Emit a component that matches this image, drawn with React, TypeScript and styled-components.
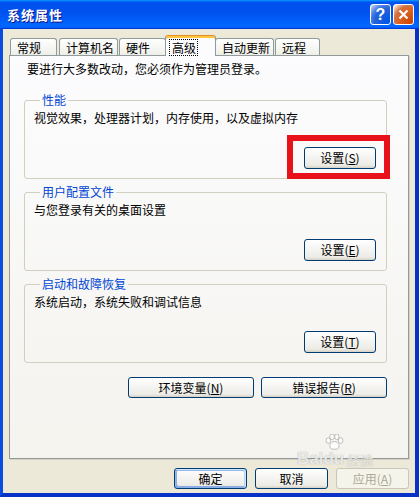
import styled, { createGlobalStyle } from "styled-components";

const GlobalStyle = createGlobalStyle`
  html, body {
    margin: 0;
    padding: 0;
    background: #0831d9;
  }
  body {
    font-family: "Noto Sans CJK SC", "Liberation Sans", sans-serif;
    font-size: 12px;
  }
`;

const Window = styled.div`
  position: relative;
  width: 419px;
  height: 497px;
  display: flex;
  flex-direction: column;
  overflow: hidden;
  background: #0842d9;
`;

const TitleBar = styled.div`
  height: 29px;
  flex-shrink: 0;
  display: flex;
  align-items: center;
  justify-content: space-between;
  padding: 0 5px 0 7px;
  background: linear-gradient(
    180deg,
    #0997ff,
    #0053ee 8%,
    #0050ee 40%,
    #06f 88%,
    #06f 93%,
    #005bff 95%,
    #003dd7 96%,
    #003dd7
  );
`;

const Title = styled.span`
  color: #fff;
  font-size: 13px;
  font-weight: bold;
  letter-spacing: 1px;
  text-shadow: 1px 1px #0f1089;
`;

const CaptionButtons = styled.div`
  display: flex;
  gap: 2px;
`;

const CaptionButton = styled.div<{ $close?: boolean }>`
  width: 21px;
  height: 21px;
  box-sizing: border-box;
  border: 1px solid #fff;
  border-radius: 3px;
  display: flex;
  align-items: center;
  justify-content: center;
  color: #fff;
  font: bold 16px "Liberation Sans", sans-serif;
  background: ${(p) =>
    p.$close
      ? "radial-gradient(circle at 90% 90%, #cc4600 0, #dc6527 55%, #cd7546 70%, #ffccb2 90%, #fff 100%)"
      : "radial-gradient(circle at 90% 90%, #0054e9 0, #2263d5 55%, #4479e4 70%, #a3bbec 90%, #fff 100%)"};
`;

const Frame = styled.div`
  flex: 1;
  display: flex;
  flex-direction: column;
  border-left: 3px solid #0a4be0;
  border-right: 4px solid #0831c8;
  border-bottom: 4px solid #0831c8;
  box-shadow: 1px 0 #00138c, 0 1px #00138c;
`;

const Body = styled.div`
  flex: 1;
  display: flex;
  flex-direction: column;
  background: #ece9d8;
  padding: 6px 6px 4px 6px;
`;

const TabStrip = styled.div`
  height: 20px;
  display: flex;
  align-items: flex-end;
  position: relative;
  z-index: 2;
`;

const Tab = styled.div<{ $w: number; $ml: number; $active?: boolean }>`
  box-sizing: border-box;
  width: ${(p) => p.$w}px;
  margin-left: ${(p) => p.$ml}px;
  height: ${(p) => (p.$active ? 21 : 17)}px;
  margin-bottom: ${(p) => (p.$active ? -1 : 0)}px;
  position: relative;
  z-index: ${(p) => (p.$active ? 3 : 1)};
  display: flex;
  align-items: center;
  padding-left: ${(p) => (p.$active ? 3 : 6)}px;
  padding-top: ${(p) => (p.$active ? 0 : 1)}px;
  border: 1px solid #919b9c;
  border-bottom: none;
  border-radius: 3px 3px 0 0;
  line-height: 14px;
  color: #000;
  white-space: nowrap;
  background: ${(p) =>
    p.$active
      ? "#fcfcfe"
      : "linear-gradient(180deg, #fff, #fafaf9 26%, #f0f0ea 95%, #ecebe6)"};
  ${(p) =>
    p.$active &&
    `
    border-top: 1px solid #e68b2c;
    box-shadow: inset 0 2px #ffc73c;
  `}
`;

const FocusText = styled.span`
  border: 1px dotted #000;
  padding: 1px 1px 0 2px;
  margin-top: 2px;
`;

const Panel = styled.div`
  flex: 1;
  position: relative;
  z-index: 1;
  display: flex;
  flex-direction: column;
  border: 1px solid #919b9c;
  box-shadow: 1px 1px 0 #d5d2c3;
  background: linear-gradient(180deg, #fcfcfe, #f4f3ee);
  padding: 6px 21px 0 14px;
`;

const Intro = styled.div`
  margin-left: 3px;
  line-height: 14px;
  color: #000;
`;

const Group = styled.fieldset`
  margin: 0;
  min-width: 0;
  padding: 4px 10px 9px 9px;
  border: 1px solid #d0d0bf;
  border-radius: 3px;
  & + & {
    margin-top: 6px;
  }
  ${Intro} + & {
    margin-top: 17px;
  }
`;

const Legend = styled.legend`
  margin-left: 6px;
  padding: 0 2px;
  color: #0046d5;
  line-height: 14px;
`;

const Desc = styled.div`
  line-height: 14px;
  color: #000;
`;

const ButtonRow = styled.div<{ $mt: number; $gap?: number }>`
  display: flex;
  justify-content: flex-end;
  gap: ${(p) => p.$gap ?? 0}px;
  margin-top: ${(p) => p.$mt}px;
`;

const Button = styled.button<{ $w: number; $h?: number; $primary?: boolean }>`
  box-sizing: border-box;
  width: ${(p) => p.$w}px;
  height: ${(p) => p.$h ?? 22}px;
  padding: 0;
  font: 12px "Noto Sans CJK SC", "Liberation Sans", sans-serif;
  line-height: 14px;
  color: #000;
  border: 1px solid #003c74;
  border-radius: 3px;
  background: linear-gradient(180deg, #fff, #ecebe6 86%, #d6d0c5);
  box-shadow: ${(p) =>
    p.$primary
      ? "inset -1px 1px #cee7ff, inset 1px 2px #98b8ea, inset -2px 2px #bcd4f6, inset 1px -1px #89ade4, inset 2px -2px #89ade4"
      : "none"};

  &:disabled {
    color: #aca899;
    border-color: #c9c7ba;
    background: #f5f4ea;
  }
`;

const Mark = styled.span`
  position: relative;
  display: inline-flex;
`;

const RedBox = styled.span`
  position: absolute;
  top: -12px;
  right: -14px;
  bottom: -10px;
  left: -17px;
  border: 6px solid #e8121a;
  pointer-events: none;
`;

const Watermark = styled.div`
  position: absolute;
  left: 297px;
  top: 434px;
  z-index: 5;
  display: flex;
  align-items: flex-end;
  color: rgba(255, 255, 255, 0.8);
  text-shadow: 0 0 1px rgba(110, 110, 110, 0.7);
  pointer-events: none;
`;

const WmLatin = styled.span`
  font: bold 17px "Liberation Sans", sans-serif;
  line-height: 17px;
`;

const WmDu = styled.span`
  display: flex;
  flex-direction: column;
  align-items: center;
`;

const WmCjk = styled.span`
  font-size: 13px;
  line-height: 15px;
  margin-left: 3px;
`;

const tabs = [
  { label: "常规", w: 47, ml: 1 },
  { label: "计算机名", w: 59, ml: 2 },
  { label: "硬件", w: 47, ml: 1 },
  { label: "高级", w: 51, ml: -1, active: true },
  { label: "自动更新", w: 59, ml: -1 },
  { label: "远程", w: 45, ml: 1 },
];

function Paw() {
  return (
    <svg width="20" height="16" viewBox="0 0 20 17">
      <g fill="rgba(255,255,255,0.8)" stroke="rgba(120,120,120,0.6)" strokeWidth="0.8">
        <ellipse cx="4" cy="7" rx="2.4" ry="3" />
        <ellipse cx="8" cy="3" rx="2.4" ry="3" />
        <ellipse cx="13" cy="3" rx="2.4" ry="3" />
        <ellipse cx="17" cy="7" rx="2.4" ry="3" />
        <path d="M10.5 8 C6 8 4 14 7 15.5 C9 16.5 12 16.5 14 15.5 C17 14 15 8 10.5 8 Z" />
      </g>
    </svg>
  );
}

export default function App() {
  return (
    <>
      <GlobalStyle />
      <Window>
        <TitleBar>
          <Title>系统属性</Title>
          <CaptionButtons>
            <CaptionButton>?</CaptionButton>
            <CaptionButton $close>
              <svg width="11" height="11" viewBox="0 0 11 11">
                <path d="M1.5 1.5 L9.5 9.5 M9.5 1.5 L1.5 9.5" stroke="#fff" strokeWidth="2.2" />
              </svg>
            </CaptionButton>
          </CaptionButtons>
        </TitleBar>
        <Frame>
          <Body>
            <TabStrip>
              {tabs.map((t) => (
                <Tab key={t.label} $w={t.w} $ml={t.ml} $active={t.active}>
                  {t.active ? <FocusText>{t.label}</FocusText> : t.label}
                </Tab>
              ))}
            </TabStrip>
            <Panel>
              <Intro>要进行大多数改动，您必须作为管理员登录。</Intro>
              <Group>
                <Legend>性能</Legend>
                <Desc>视觉效果，处理器计划，内存使用，以及虚拟内存</Desc>
                <ButtonRow $mt={22}>
                  <Mark>
                    <Button $w={72}>
                      设置(<u>S</u>)
                    </Button>
                    <RedBox />
                  </Mark>
                </ButtonRow>
              </Group>
              <Group>
                <Legend>用户配置文件</Legend>
                <Desc>与您登录有关的桌面设置</Desc>
                <ButtonRow $mt={22}>
                  <Button $w={72}>
                    设置(<u>E</u>)
                  </Button>
                </ButtonRow>
              </Group>
              <Group>
                <Legend>启动和故障恢复</Legend>
                <Desc>系统启动，系统失败和调试信息</Desc>
                <ButtonRow $mt={22}>
                  <Button $w={72}>
                    设置(<u>T</u>)
                  </Button>
                </ButtonRow>
              </Group>
              <ButtonRow $mt={14} $gap={7}>
                <Button $w={126} $h={21}>
                  环境变量(<u>N</u>)
                </Button>
                <Button $w={126} $h={21}>
                  错误报告(<u>R</u>)
                </Button>
              </ButtonRow>
            </Panel>
            <ButtonRow $mt={9} $gap={8}>
              <Button $w={73} $h={21} $primary>
                确定
              </Button>
              <Button $w={73} $h={21}>
                取消
              </Button>
              <Button $w={73} $h={21} disabled>
                应用(<u>A</u>)
              </Button>
            </ButtonRow>
          </Body>
        </Frame>
        <Watermark>
          <WmLatin>Bai</WmLatin>
          <WmDu>
            <Paw />
            <WmLatin>du</WmLatin>
          </WmDu>
          <WmCjk>经验</WmCjk>
        </Watermark>
      </Window>
    </>
  );
}
